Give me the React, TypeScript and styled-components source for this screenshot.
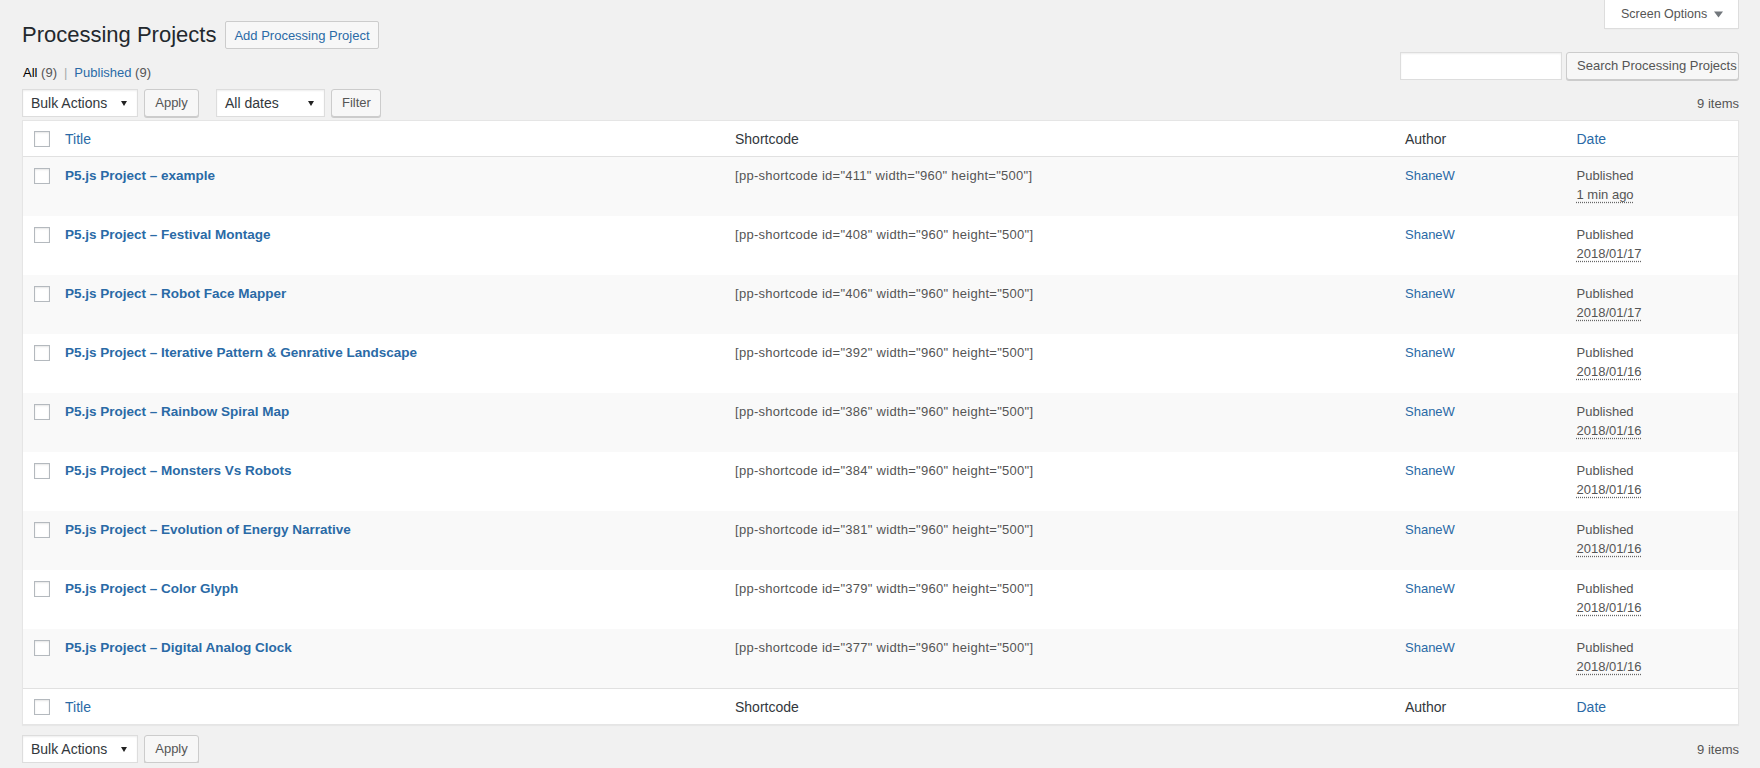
import styled, { createGlobalStyle } from "styled-components";

const LINK = "#2a6aa6";

const GlobalStyle = createGlobalStyle`
  body {
    margin: 0;
    background: #f1f1f1;
    color: #444;
    font-family: "Liberation Sans", Arial, sans-serif;
    font-size: 13px;
  }
`;

const Page = styled.div`
  padding: 0 21px 0 22px;
`;

const Header = styled.div`
  display: flex;
  justify-content: space-between;
  align-items: flex-start;
`;

const TitleGroup = styled.div`
  display: flex;
  align-items: center;
  gap: 9px;
  padding-top: 20px;
`;

const Title = styled.h1`
  margin: 0;
  font-size: 22px;
  font-weight: 400;
  line-height: 30px;
  color: #23282d;
`;

const TitleAction = styled.a`
  box-sizing: border-box;
  height: 28px;
  display: inline-flex;
  align-items: center;
  padding: 0 8px;
  border: 1px solid #ccc;
  border-radius: 2px;
  background: #f7f7f7;
  color: ${LINK};
  font-size: 13px;
  text-decoration: none;
`;

const ScreenOptions = styled.button`
  box-sizing: border-box;
  height: 29px;
  width: 135px;
  display: flex;
  align-items: center;
  justify-content: space-between;
  padding: 0 15px 0 16px;
  border: 1px solid #ddd;
  border-top: none;
  background: #fff;
  color: #555;
  font: inherit;
  font-size: 12.5px;
  box-shadow: 0 1px 1px -1px rgba(0, 0, 0, 0.1);
`;

const SearchRow = styled.div`
  display: flex;
  justify-content: space-between;
  align-items: flex-start;
  height: 28px;
  margin-top: 2px;
`;

const Views = styled.ul`
  display: flex;
  margin: 11px 0 0;
  padding: 0 0 0 1px;
  list-style: none;
  line-height: 19px;
  color: #666;
`;

const ViewLink = styled.a<{ $current?: boolean }>`
  color: ${(p) => (p.$current ? "#000" : LINK)};
  text-decoration: none;
`;

const Count = styled.span`
  color: #555;
`;

const Sep = styled.span`
  color: #aaa;
  margin: 0 7px;
`;

const SearchBox = styled.div`
  display: flex;
  gap: 4px;
`;

const SearchInput = styled.input`
  box-sizing: border-box;
  width: 162px;
  height: 28px;
  border: 1px solid #ddd;
  background: #fff;
  box-shadow: inset 0 1px 2px rgba(0, 0, 0, 0.07);
  margin: 0;
`;

const Button = styled.button<{ $w: number }>`
  box-sizing: border-box;
  width: ${(p) => p.$w}px;
  height: 28px;
  padding: 0 10px 1px;
  border: 1px solid #ccc;
  border-radius: 3px;
  background: #f7f7f7;
  box-shadow: 0 1px 0 #ccc;
  color: #555;
  font: inherit;
  font-size: 13px;
  white-space: nowrap;
`;

const TableNav = styled.div<{ $top?: boolean }>`
  display: flex;
  align-items: center;
  height: 28px;
  margin-top: ${(p) => (p.$top ? "9px" : "10px")};
`;

const Actions = styled.div`
  display: flex;
  align-items: center;
  gap: 6px;
  margin-right: 17px;
`;

const SelectBox = styled.div<{ $w: number }>`
  position: relative;
  box-sizing: border-box;
  width: ${(p) => p.$w}px;
  height: 28px;
  display: flex;
  align-items: center;
  padding: 0 8px;
  border: 1px solid #ddd;
  background: #fff;
  box-shadow: inset 0 1px 2px rgba(0, 0, 0, 0.07);
  color: #32373c;
  font-size: 14px;

  &::after {
    content: "";
    position: absolute;
    right: 10px;
    top: 11px;
    border-left: 3px solid transparent;
    border-right: 3px solid transparent;
    border-top: 5px solid #222;
  }
`;

const Items = styled.div`
  margin-left: auto;
  color: #555;
  font-size: 13px;
`;

const Table = styled.table`
  width: 100%;
  margin-top: 3px;
  table-layout: fixed;
  border-spacing: 0;
  border: 1px solid #e5e5e5;
  background: #fff;
  box-shadow: 0 1px 1px rgba(0, 0, 0, 0.04);
`;

const HeadCell = styled.th<{ $sortable?: boolean; $foot?: boolean }>`
  box-sizing: border-box;
  height: 36px;
  padding: 0 10px;
  text-align: left;
  font-weight: 400;
  font-size: 14px;
  color: ${(p) => (p.$sortable ? LINK : "#32373c")};
  border-bottom: ${(p) => (p.$foot ? "none" : "1px solid #e1e1e1")};
  border-top: ${(p) => (p.$foot ? "1px solid #e1e1e1" : "none")};
`;

const CheckCell = styled.td<{ $head?: boolean; $foot?: boolean }>`
  box-sizing: border-box;
  padding: ${(p) => (p.$head ? "0 0 0 3px" : "11px 0 0 3px")};
  vertical-align: ${(p) => (p.$head ? "middle" : "top")};
  border-bottom: ${(p) => (p.$head && !p.$foot ? "1px solid #e1e1e1" : "none")};
  border-top: ${(p) => (p.$foot ? "1px solid #e1e1e1" : "none")};
  line-height: 0;
`;

const Check = styled.input.attrs({ type: "checkbox" })`
  appearance: none;
  width: 16px;
  height: 16px;
  margin: 0 0 0 8px;
  border: 1px solid #b4b9be;
  background: #fff;
  box-shadow: inset 0 1px 2px rgba(0, 0, 0, 0.1);
`;

const Row = styled.tr<{ $alt: boolean }>`
  height: 59px;
  background: ${(p) => (p.$alt ? "#f9f9f9" : "#fff")};
`;

const Cell = styled.td<{ $code?: boolean }>`
  padding: 9px 10px 8px;
  vertical-align: top;
  line-height: 19px;
  color: #555;
  font-size: 13px;
  letter-spacing: ${(p) => (p.$code ? "0.27px" : "normal")};
`;

const RowTitle = styled.a`
  color: ${LINK};
  font-size: 13.5px;
  font-weight: 700;
  text-decoration: none;
`;

const AuthorLink = styled.a`
  color: ${LINK};
  text-decoration: none;
`;

const DateAbbr = styled.abbr`
  text-decoration: underline dotted #666;
  text-underline-offset: 3px;
`;

const projects = [
  { id: 411, name: "example", date: "1 min ago" },
  { id: 408, name: "Festival Montage", date: "2018/01/17" },
  { id: 406, name: "Robot Face Mapper", date: "2018/01/17" },
  { id: 392, name: "Iterative Pattern & Genrative Landscape", date: "2018/01/16" },
  { id: 386, name: "Rainbow Spiral Map", date: "2018/01/16" },
  { id: 384, name: "Monsters Vs Robots", date: "2018/01/16" },
  { id: 381, name: "Evolution of Energy Narrative", date: "2018/01/16" },
  { id: 379, name: "Color Glyph", date: "2018/01/16" },
  { id: 377, name: "Digital Analog Clock", date: "2018/01/16" },
];

const ColumnHeads = ({ foot }: { foot?: boolean }) => (
  <tr>
    <CheckCell $head $foot={foot}>
      <Check />
    </CheckCell>
    <HeadCell $sortable $foot={foot}>Title</HeadCell>
    <HeadCell $foot={foot}>Shortcode</HeadCell>
    <HeadCell $foot={foot}>Author</HeadCell>
    <HeadCell $sortable $foot={foot}>Date</HeadCell>
  </tr>
);

const Caret = () => (
  <svg width="9" height="7" viewBox="0 0 9 7">
    <path d="M0 0.5h9L4.5 6.5z" fill="#72777c" />
  </svg>
);

export default function App() {
  return (
    <>
      <GlobalStyle />
      <Page>
        <Header>
          <TitleGroup>
            <Title>Processing Projects</Title>
            <TitleAction href="#">Add Processing Project</TitleAction>
          </TitleGroup>
          <ScreenOptions>
            Screen Options <Caret />
          </ScreenOptions>
        </Header>

        <SearchRow>
          <Views>
            <li>
              <ViewLink $current href="#">All</ViewLink> <Count>(9)</Count>
              <Sep>|</Sep>
            </li>
            <li>
              <ViewLink href="#">Published</ViewLink> <Count>(9)</Count>
            </li>
          </Views>
          <SearchBox>
            <SearchInput />
            <Button $w={173}>Search Processing Projects</Button>
          </SearchBox>
        </SearchRow>

        <TableNav $top>
          <Actions>
            <SelectBox $w={116}>Bulk Actions</SelectBox>
            <Button $w={55}>Apply</Button>
          </Actions>
          <Actions>
            <SelectBox $w={109}>All dates</SelectBox>
            <Button $w={50}>Filter</Button>
          </Actions>
          <Items>9 items</Items>
        </TableNav>

        <Table>
          <colgroup>
            <col style={{ width: 32 }} />
            <col />
            <col />
            <col style={{ width: "10%" }} />
            <col style={{ width: "10%" }} />
          </colgroup>
          <thead>
            <ColumnHeads />
          </thead>
          <tbody>
            {projects.map((p, i) => (
              <Row key={p.id} $alt={i % 2 === 0}>
                <CheckCell>
                  <Check />
                </CheckCell>
                <Cell>
                  <RowTitle href="#">P5.js Project – {p.name}</RowTitle>
                </Cell>
                <Cell $code>
                  [pp-shortcode id="{p.id}" width="960" height="500"]
                </Cell>
                <Cell>
                  <AuthorLink href="#">ShaneW</AuthorLink>
                </Cell>
                <Cell>
                  Published
                  <br />
                  <DateAbbr>{p.date}</DateAbbr>
                </Cell>
              </Row>
            ))}
          </tbody>
          <tfoot>
            <ColumnHeads foot />
          </tfoot>
        </Table>

        <TableNav>
          <Actions>
            <SelectBox $w={116}>Bulk Actions</SelectBox>
            <Button $w={55}>Apply</Button>
          </Actions>
          <Items>9 items</Items>
        </TableNav>
      </Page>
    </>
  );
}
